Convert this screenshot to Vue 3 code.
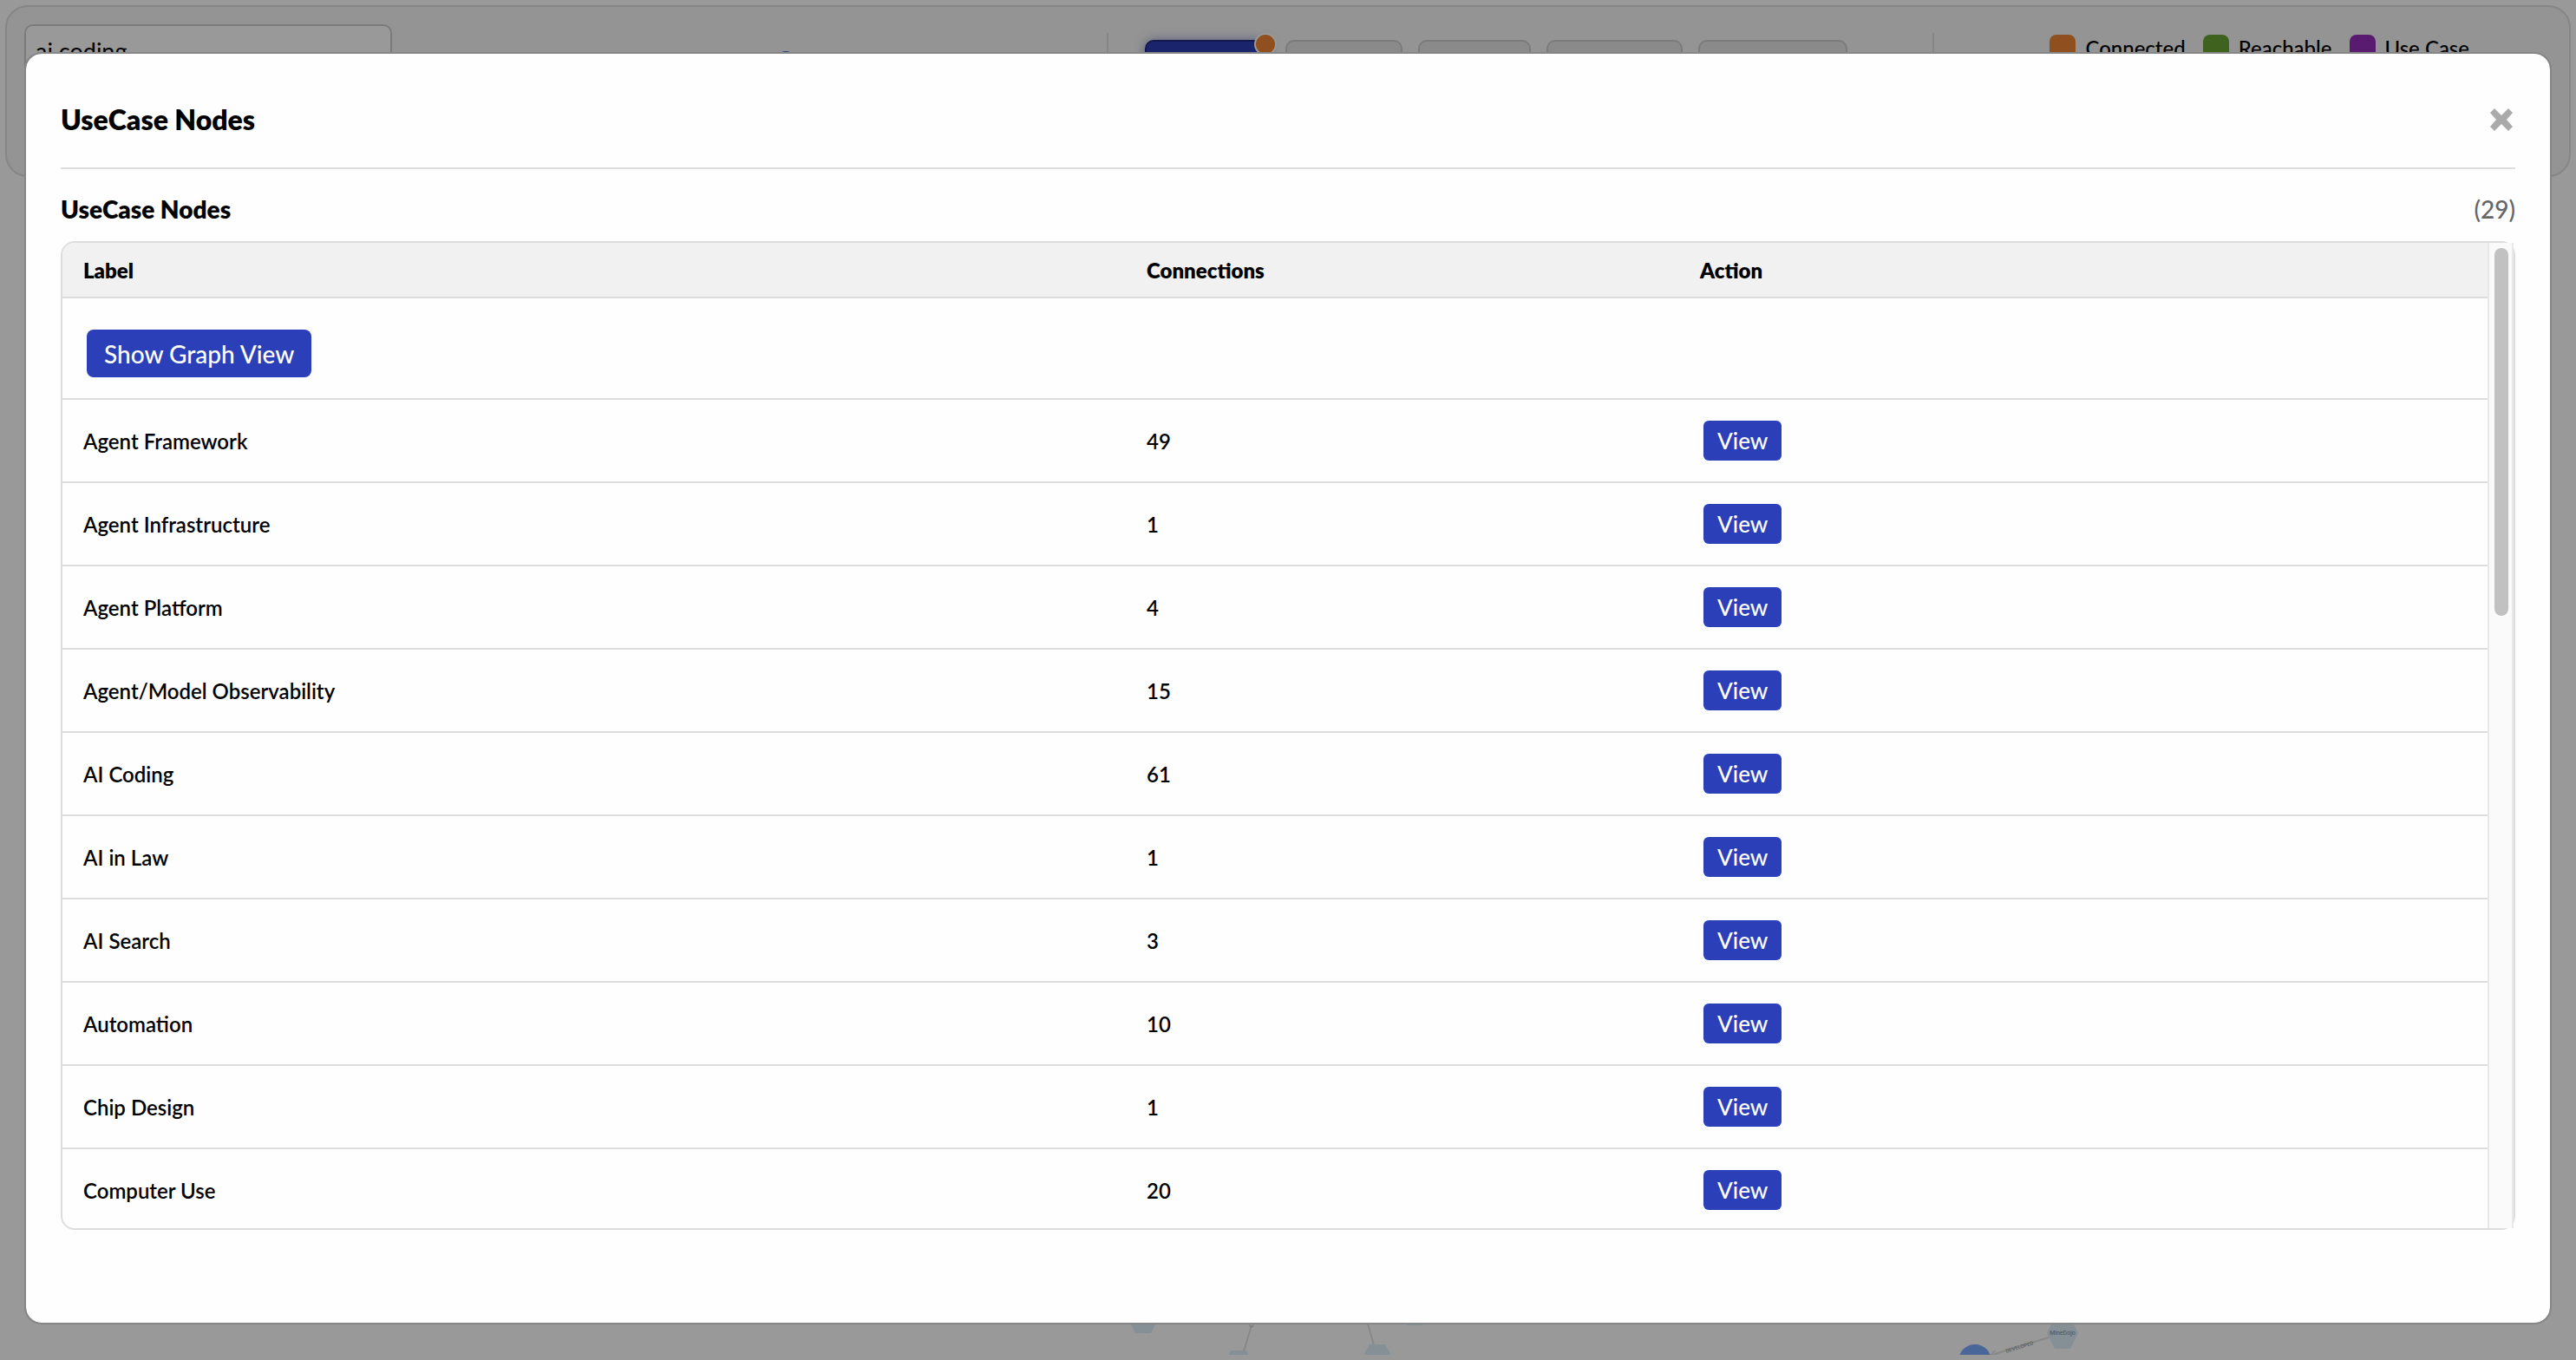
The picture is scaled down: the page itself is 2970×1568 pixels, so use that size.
<script setup>
import { ref } from 'vue'

const query = ref('ai coding')
const total = 29
const filters = [
  { width: 144, active: true },
  { width: 135 },
  { width: 130 },
  { width: 157 },
  { width: 172 },
]
const legend = [
  { name: 'Connected', color: '#ee8434' },
  { name: 'Reachable', color: '#6ca334' },
  { name: 'Use Case', color: '#952dbb' },
]
const rows = [
  { label: 'Agent Framework', connections: 49 },
  { label: 'Agent Infrastructure', connections: 1 },
  { label: 'Agent Platform', connections: 4 },
  { label: 'Agent/Model Observability', connections: 15 },
  { label: 'AI Coding', connections: 61 },
  { label: 'AI in Law', connections: 1 },
  { label: 'AI Search', connections: 3 },
  { label: 'Automation', connections: 10 },
  { label: 'Chip Design', connections: 1 },
  { label: 'Computer Use', connections: 20 },
]
</script>

<template>
  <div class="page">
    <header class="toolbar">
      <div class="search-area">
        <input v-model="query" class="search" type="text" aria-label="Search" />
        <span class="knob"></span>
      </div>
      <div class="filters">
        <button
          v-for="(f, i) in filters"
          :key="i"
          type="button"
          class="filter"
          :class="{ active: f.active }"
          :style="{ width: f.width + 'px' }"
          :aria-label="'Filter ' + (i + 1)"
        >
          <span v-if="f.active" class="badge"></span>
        </button>
      </div>
      <ul class="legend">
        <li v-for="l in legend" :key="l.name">
          <span class="swatch" :style="{ background: l.color }"></span>{{ l.name }}
        </li>
      </ul>
    </header>

    <main class="canvas">
      <svg viewBox="0 1502 2970 60" aria-hidden="true">
        <g stroke="#e2e2e2" stroke-width="2" fill="none">
          <path d="M1443 1528L1434 1558M1577 1526L1584 1551M2362 1542L2300 1561" />
          <path d="M2300 1557l-4 5 7 0" />
        </g>
        <circle cx="1443" cy="1528" r="2" fill="none" stroke="#c4c4c4" />
        <g fill="#dcf1fa">
          <path d="M1300 1519l9-18h18l9 18-9 18h-18z" />
          <path d="M1410 1575l9-18h18l9 18-9 18h-18z" />
          <path d="M1569 1568l10-18h18l10 18-10 18h-18z" />
          <path d="M1613 1510l9-18h18l9 18-9 18h-18z" />
          <path d="M2360 1537l9-18h18l9 18-9 18h-18z" />
        </g>
        <circle cx="2277" cy="1569" r="19" fill="#7baaff" />
        <text x="2378" y="1539" class="node-text">MineDojo</text>
        <text x="2329" y="1555" class="node-text edge-text" transform="rotate(-17 2329 1555)">DEVELOPED</text>
      </svg>
    </main>

    <div class="overlay">
      <section class="modal" role="dialog" aria-modal="true" aria-labelledby="modal-title">
        <div class="modal-head">
          <h2 id="modal-title">UseCase Nodes</h2>
          <button class="close" type="button" aria-label="Close">
            <svg viewBox="0 0 28 28" width="28" height="28">
              <path d="M6 1L14 9L22 1L27 6L20 14L27 22L22 27L14 19L6 27L1 22L8 14L1 6Z" fill="#aaa" />
            </svg>
          </button>
        </div>
        <div class="list-head">
          <h3>UseCase Nodes</h3>
          <span class="count">({{ total }})</span>
        </div>
        <div class="list">
          <div class="viewport">
            <table>
              <colgroup>
                <col class="col-label" />
                <col class="col-connections" />
                <col />
              </colgroup>
              <thead>
                <tr>
                  <th scope="col">Label</th>
                  <th scope="col">Connections</th>
                  <th scope="col">Action</th>
                </tr>
              </thead>
              <tbody>
                <tr class="graph-row">
                  <td colspan="3"><button type="button" class="btn btn-large">Show Graph View</button></td>
                </tr>
                <tr v-for="r in rows" :key="r.label">
                  <td>{{ r.label }}</td>
                  <td>{{ r.connections }}</td>
                  <td><button type="button" class="btn">View</button></td>
                </tr>
              </tbody>
            </table>
          </div>
          <div class="track"><div class="thumb"></div></div>
        </div>
      </section>
    </div>
  </div>
</template>

<style>
body {
  margin: 0;
  background: #fff;
}
</style>

<style scoped>
* {
  box-sizing: border-box;
}
.page {
  position: relative;
  display: flex;
  flex-direction: column;
  height: 100vh;
  padding: 6px;
  overflow: hidden;
  font-family: Lato, "Open Sans", sans-serif;
  font-size: 24px;
  font-weight: 500;
  color: #000;
}
.toolbar {
  display: flex;
  align-items: flex-start;
  height: 198px;
  flex: none;
  padding: 20px;
  background: #f7f7f7;
  border: 2px solid #dfdfdf;
  border-radius: 26px;
}
.search-area {
  display: flex;
  width: calc(43% - 5px);
  height: 120px;
  gap: 442px;
}
.search {
  width: 424px;
  height: 60px;
  padding: 0 11px;
  font: inherit;
  font-size: 27px;
  font-weight: 400;
  color: #000;
  background: #fff;
  border: 2px solid #cdcdcd;
  border-radius: 10px;
}
.knob {
  width: 24px;
  height: 24px;
  margin-top: 31px;
  border-radius: 50%;
  background: #3a68cc;
}
.filters {
  display: flex;
  gap: 18px;
  width: 954px;
  height: 120px;
  margin-top: 10px;
  padding: 8px 0 0 42px;
  border: solid #dfdfdf;
  border-width: 0 2px;
}
.filter {
  position: relative;
  flex: none;
  height: 56px;
  padding: 0;
  background: #e6e6e6;
  border: 2px solid #cdcdcd;
  border-radius: 10px;
}
.filter.active {
  background: #2b3db5;
  border-color: #1f2a80;
  box-shadow: 0 0 12px rgba(43, 61, 181, 0.5);
}
.badge {
  position: absolute;
  top: -10px;
  right: -10px;
  width: 26px;
  height: 26px;
  background: #ee8434;
  border: 2px solid #fff;
  border-radius: 50%;
}
.legend {
  display: flex;
  gap: 20px;
  margin: 12px 0 0 auto;
  padding: 0 95px 0 0;
  list-style: none;
  font-size: 24px;
  font-weight: 500;
  line-height: 32px;
}
.legend li {
  display: flex;
  gap: 11px;
}
.swatch {
  width: 30px;
  height: 30px;
  border-radius: 8px;
}
.canvas {
  display: flex;
  flex: 1;
  align-items: flex-end;
}
.canvas svg {
  flex: none;
  width: calc(100% + 12px);
  margin: 0 -6px;
}
.node-text {
  font: 7px Roboto, sans-serif;
  fill: #888;
  text-anchor: middle;
}
.edge-text {
  font-size: 6px;
}
.overlay {
  position: absolute;
  inset: 0;
  display: flex;
  padding: 60px 28px 41px;
  background: rgba(0, 0, 0, 0.4);
}
.modal {
  display: flex;
  flex: 1;
  flex-direction: column;
  min-width: 0;
  padding: 40px 40px 107px;
  background: #fefefe;
  background-clip: padding-box;
  border: 2px solid #868686;
  border-radius: 20px;
}
.modal-head {
  display: flex;
  align-items: center;
  justify-content: space-between;
  height: 93px;
  padding-bottom: 20px;
  border-bottom: 2px solid #ddd;
}
h2,
h3 {
  margin: 0;
  font-weight: 800;
}
h2 {
  font-size: 32px;
}
h3,
.count {
  font-size: 28px;
}
.close {
  display: flex;
  padding: 0 2px;
  background: none;
  border: 0;
}
.list-head {
  display: flex;
  align-items: center;
  justify-content: space-between;
  height: 83px;
  padding-top: 8px;
}
.count {
  font-weight: 500;
  color: #666;
}
.list {
  display: flex;
  flex: 1;
  min-height: 0;
  border: 2px solid #ddd;
  border-radius: 16px;
}
.viewport {
  flex: 1;
  overflow: hidden;
  border-radius: 14px 0 0 14px;
}
table {
  width: 100%;
  table-layout: fixed;
  border-spacing: 0;
}
.col-label {
  width: 43.85%;
}
.col-connections {
  width: 22.82%;
}
th,
td {
  padding: 0 24px;
  text-align: left;
  border-bottom: 2px solid #ddd;
}
th {
  height: 64px;
  font-weight: 800;
  background: #f1f1f1;
}
td {
  height: 96px;
  font-weight: 600;
}
.graph-row td {
  height: 117px;
  padding-top: 12px;
}
.btn {
  display: block;
  height: 46px;
  margin: 0 4px;
  padding: 0 16px;
  font: inherit;
  font-size: 26px;
  font-weight: 500;
  color: #fff;
  background: #2a3fb8;
  border: 0;
  border-radius: 6px;
}
.btn-large {
  height: 55px;
  padding: 0 20px;
  font-size: 28px;
  border-radius: 8px;
}
.track {
  width: 30px;
  padding: 6px 4px 6px 6px;
  background: #fafafa;
  border: solid #e8e8e8;
  border-width: 0 2px;
}
.thumb {
  width: 16px;
  height: 424px;
  border-radius: 8px;
  background: #c1c1c1;
}
</style>
